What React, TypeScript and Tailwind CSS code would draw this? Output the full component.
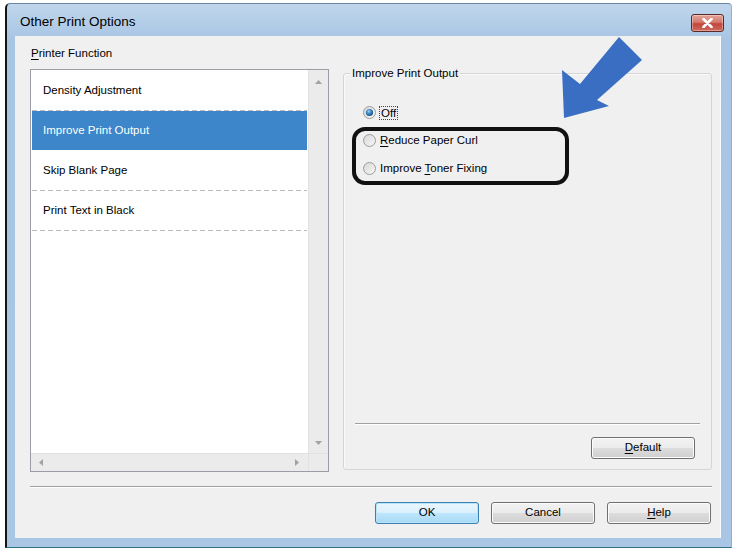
import React from "react";

const FONT = "font-['Liberation_Sans',Arial,sans-serif]";

function Radio({ checked }: { checked?: boolean }) {
  return (
    <svg width="13" height="13" viewBox="0 0 13 13" className="shrink-0">
      <defs>
        <linearGradient id="rfill" x1="0" y1="0" x2="1" y2="1">
          <stop offset="0" stopColor="#d6d6d6" />
          <stop offset="1" stopColor="#f8f8f8" />
        </linearGradient>
        <radialGradient id="rdot" cx="0.4" cy="0.35" r="0.7">
          <stop offset="0" stopColor="#9fd2f6" />
          <stop offset="0.45" stopColor="#3a86c4" />
          <stop offset="1" stopColor="#174a7c" />
        </radialGradient>
      </defs>
      <circle cx="6.5" cy="6.5" r="6" fill="url(#rfill)" stroke="#9c9c9c" strokeWidth="1" />
      {checked && <circle cx="6.5" cy="6.5" r="3.6" fill="url(#rdot)" />}
    </svg>
  );
}

function Btn({ children, focused }: { children: React.ReactNode; focused?: boolean }) {
  return (
    <div
      className={
        focused
          ? "w-[104px] h-[22px] rounded-[3px] border border-[#3c7fb1] bg-[linear-gradient(#eaf6fd_0%,#d9f0fc_50%,#bee6fd_50%,#a7d9f5_100%)] shadow-[inset_0_0_0_1px_#b8e3f8] flex items-center justify-center text-[11.5px] text-black"
          : "w-[104px] h-[22px] rounded-[3px] border border-[#707070] bg-[linear-gradient(#f2f2f2_0%,#ebebeb_50%,#dddddd_50%,#cfcfcf_100%)] shadow-[inset_0_0_0_1px_#fcfcfc] flex items-center justify-center text-[11.5px] text-black"
      }
    >
      {children}
    </div>
  );
}

function Dashes() {
  return <div className="h-px w-full bg-[linear-gradient(to_right,#bdbdbd_5px,transparent_5px)] bg-[length:8px_1px]" />;
}

function ListRow({ label, selected, dashed }: { label: string; selected?: boolean; dashed?: boolean }) {
  return (
    <div className="flex flex-col h-[40px]">
      <div
        className={
          selected
            ? "flex-1 flex items-center pl-[11px] bg-[#3c86c9] text-white"
            : "flex-1 flex items-center pl-[11px] text-black"
        }
      >
        {label}
      </div>
      {dashed ? <Dashes /> : <div className="h-px" />}
    </div>
  );
}

function ArrowUp() {
  return (
    <svg width="7" height="4" viewBox="0 0 7 4">
      <path d="M0 4 L3.5 0 L7 4 Z" fill="#a2a2a2" />
    </svg>
  );
}
function ArrowDown() {
  return (
    <svg width="7" height="4" viewBox="0 0 7 4">
      <path d="M0 0 L3.5 4 L7 0 Z" fill="#a2a2a2" />
    </svg>
  );
}
function ArrowLeft() {
  return (
    <svg width="4" height="7" viewBox="0 0 4 7">
      <path d="M4 0 L0 3.5 L4 7 Z" fill="#a2a2a2" />
    </svg>
  );
}
function ArrowRight() {
  return (
    <svg width="4" height="7" viewBox="0 0 4 7">
      <path d="M0 0 L4 3.5 L0 7 Z" fill="#a2a2a2" />
    </svg>
  );
}

function ListBox() {
  return (
    <div className="w-[299px] h-[403px] border border-[#9a9da3] bg-white flex flex-col">
      <div className="flex flex-1 min-h-0">
        <div className="flex-1 pt-px pl-px pr-px flex flex-col text-[11.5px]">
          <ListRow label="Density Adjustment" dashed />
          <ListRow label="Improve Print Output" selected />
          <ListRow label="Skip Blank Page" dashed />
          <ListRow label="Print Text in Black" dashed />
        </div>
        <div className="w-[20px] bg-[#ebebeb] border-l border-[#e2e2e2] flex flex-col items-center justify-between pt-[10px] pb-[8px]">
          <ArrowUp />
          <ArrowDown />
        </div>
      </div>
      <div className="h-[18px] flex">
        <div className="flex-1 bg-[#ebebeb] border-t border-[#e2e2e2] flex items-center justify-between pl-[8px] pr-[9px]">
          <ArrowLeft />
          <ArrowRight />
        </div>
        <div className="w-[20px] bg-[#ebebeb] border-t border-l border-[#e2e2e2]" />
      </div>
    </div>
  );
}

function GroupBox() {
  return (
    <div className="relative mt-[37px] ml-[14px] w-[369px] h-[397px] rounded-[3px] border border-[#d5d5d5] shadow-[inset_1px_1px_0_#fafafa] flex flex-col">
      <div className="absolute left-[6px] top-[-8px] px-[2px] bg-[#f0f0f0] text-[11.5px] leading-[14px] text-black">
        Improve Print Output
      </div>
      <div className="flex flex-col pl-[19px] pt-[32px] gap-[15px] text-[11.5px] text-black">
        <div className="flex items-center gap-[3px] h-[13px]">
          <Radio checked />
          <span className="border border-dotted border-[#444] px-px leading-[12px]">Off</span>
        </div>
        <div className="flex items-center gap-[3px] h-[13px]">
          <Radio />
          <span className="pl-[1px]">
            <span className="underline underline-offset-2">R</span>educe Paper Curl
          </span>
        </div>
        <div className="flex items-center gap-[3px] h-[13px]">
          <Radio />
          <span className="pl-[1px]">
            Improve <span className="underline underline-offset-2">T</span>oner Fixing
          </span>
        </div>
      </div>
      <div className="flex-1" />
      <div className="mx-[11px] h-px bg-[#a0a0a0] shadow-[0_1px_0_#ffffff]" />
      <div className="flex justify-end pr-[14px] pt-[13px] pb-[10px]">
        <div className="w-[106px]">
          <Btn>
            <span className="underline underline-offset-2">D</span>efault
          </Btn>
        </div>
      </div>
    </div>
  );
}

export default function App() {
  return (
    <div className={`relative w-[734px] h-[548px] bg-white overflow-hidden ${FONT}`}>
      <div className="ml-[5px] mt-[3px] w-[727px] h-[545px] flex flex-col rounded-tl-[5px] rounded-tr-[4px] border-l-2 border-l-[#141414] border-t border-r border-b border-t-[#6a87a6] border-r-[#8fb0cf] border-b-[#2f7284] bg-[linear-gradient(#c0d6ec_0px,#a8c5e3_36px,#a9c6e4_100%)]">
        {/* title bar */}
        <div className="h-[32px] pt-[5px] pl-[13px] pr-[7px] flex items-center justify-between">
          <span className="text-[13.5px] text-black">Other Print Options</span>
          <div className="w-[33px] h-[18px] rounded-[3px] border border-[#5c2a26] bg-[linear-gradient(#e5a399_0%,#d57a6d_45%,#c2453a_55%,#d06a5e_100%)] shadow-[inset_0_0_0_1px_rgba(255,255,255,0.35)] flex items-center justify-center">
            <svg width="11" height="10" viewBox="0 0 11 10">
              <path d="M1.5 1 L9.5 9 M9.5 1 L1.5 9" stroke="#ffffff" strokeWidth="2.6" strokeLinecap="round" />
            </svg>
          </div>
        </div>
        {/* client area */}
        <div className="ml-[8px] mr-[10px] h-[502px] bg-[#f0f0f0] border-r border-[#f8fbfe] pl-[15px] pr-[8px] flex flex-col">
          <div className="flex">
            <div className="flex flex-col">
              <div className="h-[33px] pt-[10px] pl-px text-[11.5px] leading-[15px] text-black">
                <span className="underline underline-offset-2">P</span>rinter Function
              </div>
              <ListBox />
            </div>
            <GroupBox />
          </div>
          <div className="mt-[14px] h-px bg-[#a0a0a0] shadow-[0_1px_0_#ffffff]" />
          <div className="mt-[15px] flex justify-end gap-[12px] pr-px">
            <Btn focused>OK</Btn>
            <Btn>Cancel</Btn>
            <Btn>
              <span className="underline underline-offset-2">H</span>elp
            </Btn>
          </div>
        </div>
      </div>

      {/* callout: outline around the two options */}
      <div className="absolute left-[352px] top-[127px] w-[217px] h-[58px] rounded-[13px] border-[4px] border-[#111111]" />

      {/* callout: pointing arrow */}
      <svg className="absolute left-0 top-0 pointer-events-none" width="734" height="548" viewBox="0 0 734 548">
        <polygon
          points="564,118 562,70 580,84 619,37 642,60 597,100 609,106"
          fill="#3a6ec2"
        />
      </svg>
    </div>
  );
}
